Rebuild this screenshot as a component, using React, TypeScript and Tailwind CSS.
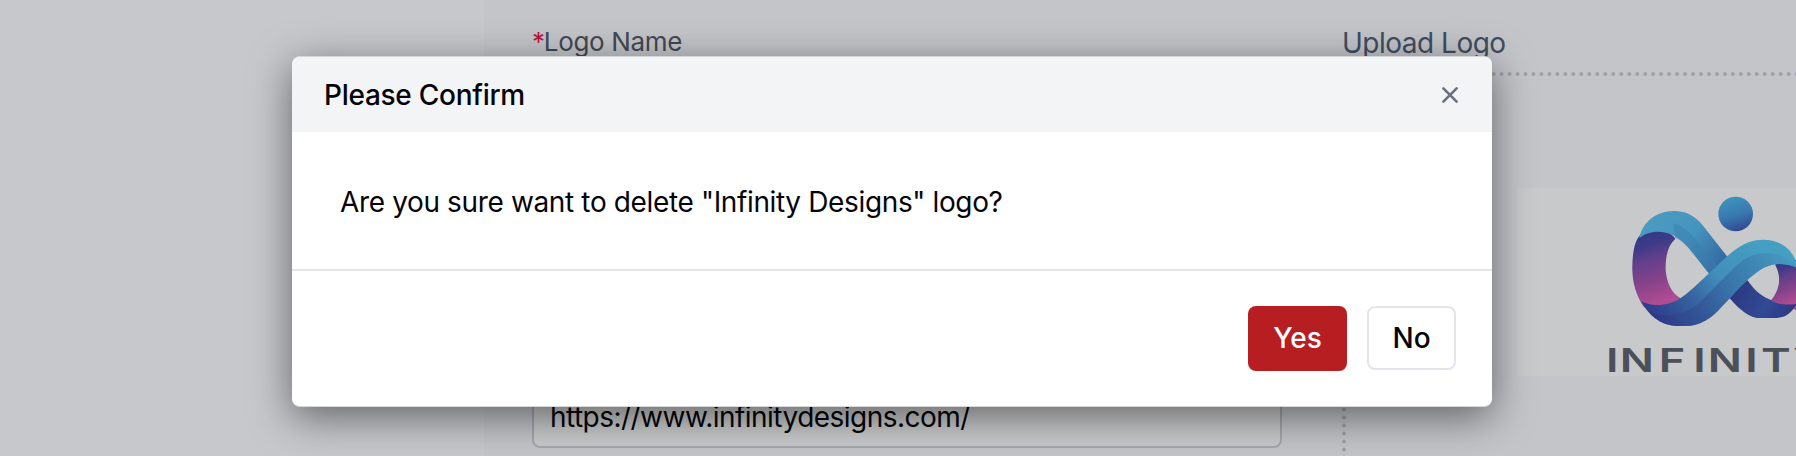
import React from "react";

function InfinityLogo() {
  return (
    <svg className="block h-[188px] w-[279px] shrink-0" viewBox="51 54 837 564" role="img" aria-label="Infinity">
      <defs>
        <linearGradient id="ball" x1="0.3" y1="0" x2="0.6" y2="1">
          <stop offset="0" stopColor="#3f94be" />
          <stop offset="0.55" stopColor="#3878b0" />
          <stop offset="1" stopColor="#324890" />
        </linearGradient>
        <linearGradient id="pink" x1="0.3" y1="0" x2="0.5" y2="1">
          <stop offset="0" stopColor="#313a86" />
          <stop offset="0.2" stopColor="#3d3b88" />
          <stop offset="0.36" stopColor="#603f8b" />
          <stop offset="0.65" stopColor="#87438a" />
          <stop offset="0.92" stopColor="#b04c93" />
        </linearGradient>
        <linearGradient id="down" gradientUnits="userSpaceOnUse" x1="440" y1="150" x2="660" y2="310">
          <stop offset="0" stopColor="#4a9bc1" />
          <stop offset="0.5" stopColor="#4594bf" />
          <stop offset="1" stopColor="#33659f" />
        </linearGradient>
        <linearGradient id="up" gradientUnits="userSpaceOnUse" x1="470" y1="450" x2="780" y2="230">
          <stop offset="0" stopColor="#2f3d8b" />
          <stop offset="0.3" stopColor="#365f9e" />
          <stop offset="0.6" stopColor="#418fbb" />
          <stop offset="1" stopColor="#459fc2" />
        </linearGradient>
        <linearGradient id="upShade" gradientUnits="userSpaceOnUse" x1="470" y1="450" x2="850" y2="250">
          <stop offset="0" stopColor="#2d3786" />
          <stop offset="0.5" stopColor="#35659f" />
          <stop offset="1" stopColor="#4495bd" />
        </linearGradient>
        <linearGradient id="tail" gradientUnits="userSpaceOnUse" x1="700" y1="350" x2="870" y2="430">
          <stop offset="0" stopColor="#2c3880" />
          <stop offset="0.6" stopColor="#314a94" />
          <stop offset="1" stopColor="#2e3884" />
        </linearGradient>
      </defs>
      <rect x="51" y="54" width="837" height="564" fill="#c7c9ca" />
      <circle cx="707" cy="132" r="52" fill="url(#ball)" />
      <path d="M418 198C440 168 500 170 526 206C505 225 496 255 497 300C500 340 515 370 542 385L500 420L432 412C408 375 396 335 397 290C398 245 404 216 418 198Z" fill="url(#pink)" />
      <path d="M826 270L888 270V420L812 392C840 360 845 320 826 286Z" fill="url(#pink)" />
      <path d="M742 330C755 350 780 378 808 388C830 403 860 406 888 402V405C870 436 850 444 820 444H770C735 436 705 405 684 378Z" fill="url(#tail)" />
      <path d="M418 204C428 155 470 122 525 123C570 124 595 148 615 175L682 260L628 312L575 245C550 212 520 186 475 185C450 185 433 192 418 204Z" fill="url(#down)" />
      <path d="M520 160C560 170 585 205 605 232L650 286L628 312L575 245C560 226 545 212 526 204Z" fill="#3a7dab" opacity="0.45" />
      <path d="M423 394C455 410 505 410 542 384C580 358 610 325 650 288C700 240 735 209 790 209C845 210 876 240 888 275V292C850 278 815 278 780 300C735 330 705 370 665 410C635 445 600 468 555 468H530C480 466 445 435 423 394Z" fill="url(#up)" />
      <path d="M447 425C500 445 550 435 590 405C640 360 680 310 722 276C770 238 835 240 888 285V292C850 278 815 278 780 300C735 330 705 370 665 410C635 445 600 468 555 468H530C490 466 465 447 447 425Z" fill="url(#upShade)" opacity="0.75" />
      <text
        x="235.5 266 353 429.6 461.5 545 580 651"
        y="607"
        transform="scale(1.35 1)"
        className="fill-[#4b5059] font-['Inter',sans-serif] text-[100px] font-semibold"
      >
        INFINITY
      </text>
    </svg>
  );
}

function LogoForm() {
  return (
    <div className="flex h-full w-full bg-[#c4c5c9]">
      <aside className="w-[484px] shrink-0 bg-[#c7c8cc]" />
      <main className="flex min-w-0 flex-1 pl-[48px]">
        <section className="flex h-[448px] w-[750px] shrink-0 flex-col justify-between pt-[25px]">
          <label className="text-[26px] leading-[34px] tracking-[-0.35px] text-[#414956]">
            <span className="tracking-[-1.2px] text-[#b8173f]">*</span>Logo Name
          </label>
          <div className="flex h-[62px] items-center rounded-lg border-2 border-[#a5a6af] bg-[#c9cacb] px-4 text-[28px] tracking-[-0.53px] text-[#050509]">
            https://www.infinitydesigns.com/
          </div>
        </section>
        <section className="ml-[60px] flex w-[700px] shrink-0 flex-col pt-[24px]">
          <h2 className="text-[28px] leading-[38px] tracking-[-0.5px] text-[#3f4d62]">Upload Logo</h2>
          <div className="mt-[10px] h-[500px] shrink-0 rounded-lg border-4 border-dotted border-[#9ca3ad] pt-[112px] pl-[171px]">
            <InfinityLogo />
          </div>
        </section>
      </main>
    </div>
  );
}

function ConfirmDialog() {
  return (
    <div
      role="dialog"
      className="absolute top-[56px] left-[292px] flex h-[351px] w-[1200px] flex-col overflow-hidden rounded-lg border-y border-[#d6d7d9] bg-white text-[28px] text-[#050509] shadow-[0_10px_40px_rgba(0,0,0,0.5)]"
    >
      <header className="flex h-[75px] shrink-0 items-center justify-between bg-[#f3f4f6] pr-[34px] pl-8">
        <h1 className="font-medium tracking-[-0.27px]">Please Confirm</h1>
        <button aria-label="Close">
          <svg className="size-4" viewBox="0 0 16 16" fill="none" stroke="#6b7080" strokeWidth="2.6" strokeLinecap="round">
            <path d="M1.4 1.4 14.6 14.6M14.6 1.4 1.4 14.6" />
          </svg>
        </button>
      </header>
      <p className="flex h-[137px] shrink-0 items-center px-12 pt-[2px] tracking-[-0.36px]">
        Are you sure want to delete "Infinity Designs" logo?
      </p>
      <footer className="flex flex-1 items-center justify-end gap-5 border-t-2 border-[#e5e5e7] pr-9 pb-px font-medium">
        <button className="h-[65px] w-[99px] rounded-lg bg-[#b71e22] text-white">Yes</button>
        <button className="h-[64px] w-[89px] rounded-lg border-2 border-[#e4e4eb] bg-white">No</button>
      </footer>
    </div>
  );
}

export default function App() {
  return (
    <div className="relative h-[456px] w-[1796px] overflow-hidden font-['Inter',sans-serif]">
      <LogoForm />
      <ConfirmDialog />
    </div>
  );
}
